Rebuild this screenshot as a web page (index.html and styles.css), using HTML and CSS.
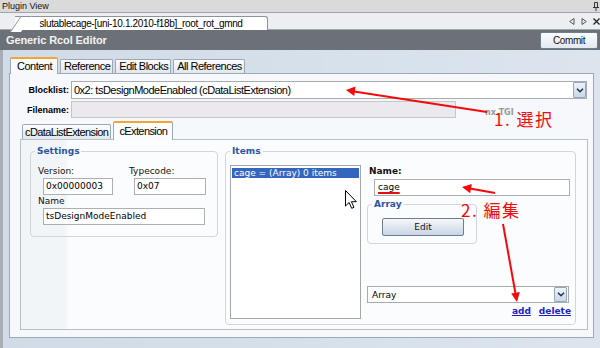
FILE: index.html
```html
<!DOCTYPE html>
<html lang="en">
<head>
  <meta charset="UTF-8" />
  <title>Plugin View</title>
  <link rel="stylesheet" href="styles.css">
</head>
<body>
<div class="app">

  <!-- Plugin view title -->
  <div class="topbar">
    <span>Plugin View</span>
    <svg class="pin" width="6" height="9" viewBox="0 0 6 9"><path d="M1.5 0.5h3v5h-3z M0 5.5h6 M3 5.5v3.5" fill="none" stroke="#333" stroke-width="1"/></svg>
  </div>

  <!-- Document tab strip -->
  <div class="docbar">
    <div class="doctab">slutablecage-[uni-10.1.2010-f18b]_root_rot_gmnd</div>
    <div class="docbtns">
      <svg width="6" height="7" viewBox="0 0 6 7"><path d="M5 0.5v6l-4.3-3z" fill="none" stroke="#555" stroke-width="1"/></svg>
      <svg width="6" height="7" viewBox="0 0 6 7"><path d="M1 0.5v6l4.3-3z" fill="none" stroke="#555" stroke-width="1"/></svg>
      <svg width="7" height="7" viewBox="0 0 7 7"><path d="M0.5 0.5l6 6M6.5 0.5l-6 6" stroke="#222" stroke-width="1.3"/></svg>
    </div>
  </div>

  <!-- Editor header -->
  <div class="header">
    <span class="title">Generic Rcol Editor</span>
    <button class="commit">Commit</button>
  </div>

  <div class="content">
    <div class="tabs">
      <div class="tab active">Content</div>
      <div class="tab">Reference</div>
      <div class="tab">Edit Blocks</div>
      <div class="tab">All References</div>
    </div>

    <div class="panel">
      <div class="row blockrow">
        <label class="lbl-bold">Blocklist:</label>
        <div class="combo big">
          <span class="combo-text">0x2: tsDesignModeEnabled (cDataListExtension)</span>
          <span class="dd"><svg width="8" height="5" viewBox="0 0 8 5"><path d="M1 0.8l3 3 3-3" fill="none" stroke="#1e2f4f" stroke-width="1.5"/></svg></span>
        </div>
      </div>
      <div class="row filerow">
        <label class="lbl-bold">Filename:</label>
        <div class="filebox"></div>
        <span class="tgi">nx TGI</span>
      </div>

      <div class="subtabs">
        <div class="tab">cDataListExtension</div>
        <div class="tab active">cExtension</div>
      </div>

      <div class="subpanel">
        <fieldset class="group settings">
          <legend>Settings</legend>
          <div class="fields">
            <div class="field">
              <div class="lbl">Version:</div>
              <div class="tb w-version">0x00000003</div>
            </div>
            <div class="field">
              <div class="lbl">Typecode:</div>
              <div class="tb w-type">0x07</div>
            </div>
            <div class="field wide">
              <div class="lbl">Name</div>
              <div class="tb w-name">tsDesignModeEnabled</div>
            </div>
          </div>
        </fieldset>

        <fieldset class="group items">
          <legend>Items</legend>
          <div class="items-body">
            <div class="listbox">
              <div class="item selected">cage = (Array) 0 items</div>
            </div>
            <div class="item-edit">
              <div class="lbl bold name-lbl">Name:</div>
              <div class="tb w-itemname"><span class="squiggle">cage</span></div>
              <fieldset class="group array">
                <legend>Array</legend>
                <button class="edit-btn">Edit</button>
              </fieldset>
              <div class="combo small">
                <span class="combo-text">Array</span>
                <span class="dd"><svg width="8" height="5" viewBox="0 0 8 5"><path d="M1 0.8l3 3 3-3" fill="none" stroke="#1e2f4f" stroke-width="1.5"/></svg></span>
              </div>
              <div class="links">
                <a href="#">add</a>
                <a href="#">delete</a>
              </div>
            </div>
          </div>
        </fieldset>
      </div>
    </div>
  </div>

  <!-- mouse pointer over the list -->
  <svg class="cursor" width="12" height="19" viewBox="0 0 12 19">
    <path d="M0.5 0.5v15.5l3.6-3.5 2.6 5.8 2.3-1-2.6-5.6h5z" fill="#fff" stroke="#000" stroke-width="1" stroke-linejoin="round"/>
  </svg>

  <!-- red annotations -->
  <svg class="arrows" width="600" height="348" viewBox="0 0 600 348">
    <g stroke="#f40a0a" stroke-width="2" fill="none">
      <line x1="487" y1="112" x2="354" y2="91.4"/>
      <line x1="495" y1="193" x2="470" y2="188.6"/>
      <line x1="503" y1="224" x2="515.4" y2="293"/>
    </g>
    <g fill="#f40a0a">
      <polygon points="346,90 355.5,86.6 354.3,96"/>
      <polygon points="462,187 471.8,184 470.2,193.2"/>
      <polygon points="517,302 519.8,292 511.2,293.6"/>
    </g>
  </svg>
  <div class="note note-select">1. 選択</div>
  <div class="note note-edit">2. 編集</div>
</div>
</body>
</html>
```

FILE: styles.css
```css
* {
  box-sizing: border-box;
}

html, body {
  margin: 0;
  padding: 0;
  width: 600px;
  height: 348px;
  overflow: hidden;
}

body {
  font-family: "Liberation Sans", Arial, sans-serif;
  font-size: 11px;
  letter-spacing: -0.5px;
  color: #000;
  background: #d5dfea;
}

.app {
  position: relative;
  width: 600px;
  height: 348px;
  display: flex;
  flex-direction: column;
}

/* top title */
.topbar {
  height: 13px;
  background: #dadada;
  border-bottom: 1px solid #a4a4a4;
  display: flex;
  align-items: center;
  justify-content: space-between;
  padding: 0 1px 0 2px;
  font-size: 9px;
  letter-spacing: 0;
  color: #111;
}

/* document tabs */
.docbar {
  height: 17px;
  background: #eceef1;
  border-bottom: 1px solid #a3a9b0;
  display: flex;
  align-items: flex-end;
  justify-content: space-between;
}

.doctab {
  position: relative;
  margin-left: 15px;
  width: 253px;
  height: 14px;
  background: #fff;
  border: 1px solid #8c939b;
  border-left: none;
  border-bottom: none;
  border-radius: 0 3px 0 0;
  font-size: 10px;
  letter-spacing: -0.35px;
  line-height: 13px;
  text-align: center;
  margin-bottom: -1px;
}

.doctab::before {
  content: "";
  position: absolute;
  left: -5px;
  top: -1px;
  width: 10px;
  height: 15px;
  background: #fff;
  border-left: 1px solid #8c939b;
  border-top: 1px solid #8c939b;
  transform: skewX(-34deg);
  transform-origin: bottom left;
}

.docbtns {
  display: flex;
  gap: 6px;
  align-items: center;
  height: 16px;
}

/* header */
.header {
  height: 20px;
  background: #6c7178;
  display: flex;
  align-items: center;
  justify-content: space-between;
  padding: 0 2px 0 6px;
}

.title {
  color: #f3f3f3;
  font-weight: bold;
  font-size: 11px;
  letter-spacing: -0.1px;
}

.commit {
  width: 58px;
  height: 17px;
  padding: 0;
  border: 1px solid #6d7e95;
  border-radius: 2px;
  background: linear-gradient(#fcfdfe, #e3e9f0);
  font-family: "Liberation Sans", Arial, sans-serif;
  font-size: 10px;
  letter-spacing: -0.4px;
  color: #111;
}

/* content */
.content {
  flex: 1;
  border-left: 3px solid #a9aeb5;
  padding: 7px 6px 0 6px;
  background: linear-gradient(to right, #d0dbe7, #dce5ee);
}

.tabs {
  display: flex;
  align-items: flex-end;
  gap: 2px;
  height: 16px;
  padding-left: 1px;
}

.tab {
  height: 14px;
  padding: 0 2px 0 3px;
  line-height: 13px;
  border: 1px solid #9ca8b5;
  border-bottom: none;
  border-radius: 2px 2px 0 0;
  background: linear-gradient(#fbfcfd, #e2e7ed);
  white-space: nowrap;
}

.tab.active {
  position: relative;
  z-index: 1;
  height: 17px;
  margin-bottom: -1px;
  padding: 0 5px 0 6px;
  line-height: 14px;
  background: #f7f9fb;
  border-top: 2px solid #f1a437;
}

.panel {
  width: 585px;
  height: 265px;
  border: 1px solid #9da9b6;
  background: #f6f8fb;
}

.row {
  display: flex;
  align-items: center;
}

.lbl-bold {
  width: 59px;
  text-align: right;
  font-weight: bold;
  font-size: 9px;
  letter-spacing: 0;
  margin-right: 2px;
}

.blockrow {
  margin-top: 7px;
}

.combo {
  display: flex;
  align-items: center;
  justify-content: space-between;
  background: #fff;
  border: 1px solid #a7abb2;
}

.combo.big {
  width: 516px;
  height: 18px;
  padding-left: 2px;
}

.combo-text {
  white-space: nowrap;
}

.dd {
  width: 13px;
  height: 16px;
  display: flex;
  align-items: center;
  justify-content: center;
  border: 1px solid #95a7bd;
  border-radius: 1px;
  background: linear-gradient(#eef3f9, #c9d7e6);
}

.filerow {
  margin-top: 2px;
}

.filebox {
  width: 385px;
  height: 17px;
  background: #ebe9ee;
  border: 1px solid #c6c6ca;
}

.tgi {
  align-self: flex-end;
  margin-left: 29px;
  font-family: "DejaVu Sans", Verdana, sans-serif;
  font-size: 8px;
  line-height: 10px;
  font-weight: bold;
  letter-spacing: 0;
  color: #9a9a9a;
}

.subtabs {
  display: flex;
  align-items: flex-end;
  gap: 2px;
  height: 18px;
  margin: 3px 0 0 10px;
  padding-left: 2px;
}

.subtabs .tab {
  height: 15px;
  line-height: 14px;
  padding: 0 2px 0 2px;
  letter-spacing: -0.6px;
}

.subtabs .tab.active {
  height: 19px;
  line-height: 16px;
  padding: 0 5px 0 5px;
  background: #fafbfd;
}

.subpanel {
  width: 568px;
  height: 191px;
  margin-left: 10px;
  border: 1px solid #b5c0cc;
  background: linear-gradient(to right, #f2f5f8 0, #f2f5f8 44px, #fbfcfe 48px);
  display: flex;
  align-items: flex-start;
  gap: 7px;
  padding: 6px 0 0 9px;
}

/* group boxes */
.group {
  margin: 0;
  padding: 0 4px;
  border: 1px solid #d2d6db;
  border-radius: 4px;
  min-inline-size: 0;
  font-family: "DejaVu Sans", Verdana, sans-serif;
  font-size: 9px;
  letter-spacing: 0;
}

.group legend {
  padding: 0 2px;
  font-weight: bold;
  font-size: 9px;
  line-height: 11px;
  color: #2b55a2;
}

.settings {
  width: 188px;
  height: 91px;
}

.fields {
  display: grid;
  grid-template-columns: 91px 80px;
  row-gap: 1px;
  margin: 9px 0 0 3px;
}

.field.wide {
  grid-column: 1 / -1;
}

.lbl {
  line-height: 11px;
  color: #111;
}

.lbl.bold {
  font-weight: bold;
}

.tb {
  height: 17px;
  margin: 1px 0 0 5px;
  padding-left: 2px;
  line-height: 15px;
  background: #fff;
  border: 1px solid #acb0b6;
  white-space: nowrap;
}

.w-version { width: 70px; }
.w-type { width: 72px; }
.w-name { width: 162px; }

.items {
  width: 351px;
  height: 179px;
}

.items-body {
  display: flex;
  gap: 6px;
}

.listbox {
  width: 131px;
  height: 154px;
  margin-top: 8px;
  background: #fff;
  border: 1px solid #a3a7ad;
  padding: 2px 1px 0 1px;
}

.item {
  height: 10px;
  line-height: 10px;
  padding-left: 2px;
  white-space: nowrap;
}

.item.selected {
  background: #3465bf;
  color: #fff;
}

.item-edit {
  width: 204px;
  display: flex;
  flex-direction: column;
  padding-top: 9px;
}

.name-lbl {
  padding-left: 2px;
}

.w-itemname {
  width: 196px;
  margin: 2px 0 0 7px;
  padding-left: 3px;
}

.squiggle {
  text-decoration: underline #e01010;
  text-decoration-thickness: 2px;
  text-underline-offset: 2px;
}

.array {
  width: 110px;
  height: 45px;
  margin-top: 3px;
}

.edit-btn {
  display: block;
  width: 82px;
  height: 18px;
  margin: 8px 0 0 10px;
  padding: 0;
  border: 1px solid #6e7d97;
  border-radius: 2px;
  background: linear-gradient(#f6f8fb, #c9d4e3);
  font-family: "DejaVu Sans", Verdana, sans-serif;
  font-size: 9px;
  color: #111;
}

.combo.small {
  width: 202px;
  height: 17px;
  margin-top: 42px;
  padding-left: 4px;
}

.combo.small .dd {
  height: 15px;
  margin-right: 1px;
}

.links {
  display: flex;
  justify-content: flex-end;
  gap: 8px;
  margin-top: 3px;
  line-height: 11px;
}

.links a {
  color: #1b22c8;
  font-weight: bold;
  text-decoration: underline;
}

/* overlays */
.cursor {
  position: absolute;
  left: 345px;
  top: 190px;
}

.arrows {
  position: absolute;
  left: 0;
  top: 0;
  pointer-events: none;
}

.note {
  position: absolute;
  font-family: "Noto Sans CJK JP", sans-serif;
  font-size: 17px;
  line-height: 18px;
  letter-spacing: 1.5px;
  color: #f40a0a;
  white-space: nowrap;
}

.note-select {
  left: 494px;
  top: 110px;
}

.note-edit {
  left: 461px;
  top: 201px;
}
```
